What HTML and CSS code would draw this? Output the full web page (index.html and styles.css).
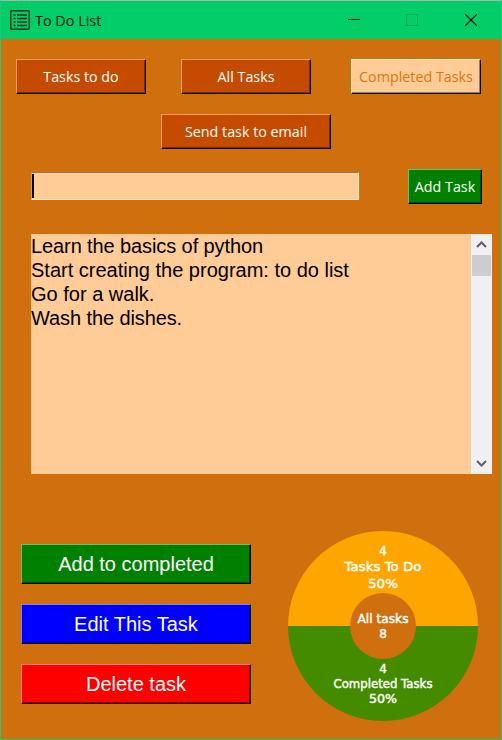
FILE: index.html
```html
<!DOCTYPE html>
<html lang="en">
<head>
<meta charset="utf-8">
<title>To Do List</title>
<link rel="stylesheet" href="styles.css">
</head>
<body>
<div class="window">
  <header class="titlebar">
    <svg class="app-icon" width="20" height="20" viewBox="0 0 20 20" fill="none" stroke="#05301b">
      <rect x=".7" y=".7" width="18.6" height="18.6" rx="1.2" stroke-width="1.4"/>
      <path d="M3.500 5h2M3.500 8.500h2M3.500 12h2M3.500 15.500h2M7 5h10M7 8.500h10M7 12h10M7 15.500h10" stroke-width="1.3"/>
    </svg>
    <h1 class="title">To Do List</h1>
    <svg class="controls" width="130" height="12" viewBox="0 0 130 12" fill="none" shape-rendering="crispEdges">
      <path d="M0 5.500h12" stroke="#000"/>
      <rect x="58.500" y=".5" width="11" height="11" stroke="#02a353"/>
      <path d="M117.300 .3l11.400 11.400M128.700 .3l-11.400 11.400" stroke="#000" stroke-width="1.1" shape-rendering="auto"/>
    </svg>
  </header>
  <main class="content">
    <nav class="filters">
      <button class="btn rust">Tasks to do</button>
      <button class="btn rust">All Tasks</button>
      <button class="btn peach">Completed Tasks</button>
    </nav>
    <button class="btn rust send">Send task to email</button>
    <div class="entry-row">
      <div class="entry"><i class="caret"></i></div>
      <button class="btn green add">Add Task</button>
    </div>
    <div class="list-row">
      <ul class="list">
        <li class="tight">Learn the basics of python</li>
        <li>Start creating the program: to do list</li>
        <li>Go for a walk.</li>
        <li class="tight">Wash the dishes.</li>
      </ul>
      <div class="scrollbar">
        <svg width="11" height="7" viewBox="0 0 11 7" fill="none" stroke="#606060" stroke-width="2"><path d="M1 6l4.500-4.500 4.500 4.500"/></svg>
        <div class="thumb"></div>
        <svg width="11" height="7" viewBox="0 0 11 7" fill="none" stroke="#606060" stroke-width="2"><path d="M1 1l4.500 4.500 4.500-4.500"/></svg>
      </div>
    </div>
    <div class="bottom">
      <div class="actions">
        <button class="btn green big">Add to completed</button>
        <button class="btn blue big">Edit This Task</button>
        <button class="btn red big">Delete task</button>
      </div>
      <svg class="chart" width="190" height="190" viewBox="0 0 190 190">
        <path d="M0 95a95 95 0 0 1 190 0z" fill="#ffa500"/>
        <path d="M0 95a95 95 0 0 0 190 0z" fill="#458b00"/>
        <circle cx="95" cy="95" r="33" fill="#cf6f0e"/>
        <g class="chart-text">
          <text x="95" y="24">4</text>
          <text x="95" y="40" textLength="77" lengthAdjust="spacingAndGlyphs">Tasks To Do</text>
          <text x="95" y="57" textLength="30" lengthAdjust="spacingAndGlyphs">50%</text>
          <text x="95" y="92" textLength="51" lengthAdjust="spacingAndGlyphs">All tasks</text>
          <text x="95" y="107">8</text>
          <text x="95" y="142">4</text>
          <text x="95" y="157" textLength="99" lengthAdjust="spacingAndGlyphs">Completed Tasks</text>
          <text x="95" y="172" textLength="28" lengthAdjust="spacingAndGlyphs">50%</text>
        </g>
      </svg>
    </div>
  </main>
</div>
</body>
</html>
```

FILE: styles.css
```css
* { box-sizing: border-box; }
body { margin: 0; overflow: hidden; }
.window {
  width: 502px;
  height: 740px;
  background: #cf6f0e;
  border: 1px solid #20c878;
  border-top-color: #a3b5ae;
  font-family: "Open Sans", "Noto Sans", sans-serif;
}
.titlebar {
  height: 38px;
  background: #02ce69;
  display: flex;
  align-items: center;
  padding: 0 23px 0 9px;
}
.title {
  margin: 0 0 0 5px;
  font-size: 14.4px;
  font-weight: 400;
  color: #04180e;
  flex: 1;
}
.content { padding: 20px 9px 0 15px; }
.filters { display: flex; gap: 35px; }
.filters .btn:last-child { margin-left: 5px; }
.btn {
  display: flex;
  align-items: center;
  justify-content: center;
  width: 130px;
  height: 35px;
  padding: 0;
  margin: 0;
  font: 14.3px "Open Sans", "Noto Sans", sans-serif;
  color: #fff;
  border: 1px solid #000;
  white-space: nowrap;
  flex: none;
}
.rust { background: #c54b00; border-top-color: #ff9b6b; border-left-color: #ff9b6b; box-shadow: inset -1px -1px #762d00; }
.peach { background: #ffcb97; color: #d8780f; border-top-color: #ffffc8; border-left-color: #ffffc8; box-shadow: inset -1px -1px #997a5b; }
.green { background: #008000; border-top-color: #6dc06d; border-left-color: #6dc06d; box-shadow: inset -1px -1px #004d00; }
.blue { background: #00f; border-top-color: #7f7fff; border-left-color: #7f7fff; box-shadow: inset -1px -1px #000099; }
.red { background: #f00; border-top-color: #ff7f7f; border-left-color: #ff7f7f; box-shadow: inset -1px -1px #900; }
.send { width: 170px; margin: 20px 0 0 145px; }
.entry-row { display: flex; align-items: flex-start; justify-content: space-between; padding: 0 10px 0 15px; margin-top: 20px; }
.entry {
  width: 328px;
  height: 28px;
  margin-top: 3px;
  background: #ffcb97;
  border: 1px solid #fff0c4;
  border-top-color: #8b7b69;
  border-left-color: #cf9c66;
  padding: 1px 0 1px;
}
.caret { display: block; width: 2px; height: 24px; background: #000; }
.add { width: 74px; }
.list-row { display: flex; margin: 30px 0 0 15px; height: 240px; }
.list {
  width: 440px;
  margin: 0;
  padding: 0;
  list-style: none;
  background: #ffcb97;
  font: 20px/24px "Liberation Sans", Arial, sans-serif;
  color: #000;
}
.tight { letter-spacing: -.1px; }
.scrollbar {
  width: 21px;
  background: #f0f0f0;
  border: solid #fff;
  border-width: 0 0 0 1px;
  padding: 7px 1px 7px 0;
  display: flex;
  flex-direction: column;
  align-items: center;
}
.thumb { width: 19px; height: 21px; margin: 7px 0 auto; background: #cdcdcd; }
.bottom { display: flex; gap: 37px; margin: 57px 0 0 5px; }
.actions { display: flex; flex-direction: column; gap: 20px; padding-top: 13px; }
.big { width: 230px; height: 40px; font: 20px "Liberation Sans", Arial, sans-serif; }
.chart-text {
  font: 12px "DejaVu Sans", Verdana, sans-serif;
  fill: #fff;
  stroke: #fff;
  stroke-width: .4px;
  text-anchor: middle;
}
```
